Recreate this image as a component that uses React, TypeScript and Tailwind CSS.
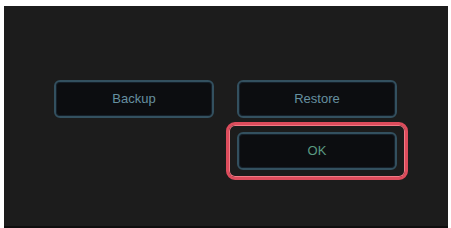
export default function App() {
  const btn =
    "flex h-[38px] w-[160px] items-center justify-center rounded-[6px] border-2 border-[#33505f] bg-[#0c0d10] text-[13px] shadow-[inset_0_0_0_1px_#15202a]";

  return (
    <div className="h-[228px] w-[451px] bg-white pl-[4px] pr-[3px] pt-[6px]" style={{ fontFamily: "'Liberation Sans', Arial, sans-serif" }}>
      <div className="h-[222px] w-full border-b-2 border-[#0e0e0e] bg-[#1c1c1c] pl-[50px] pt-[74px]">
        <div className="grid grid-cols-[160px_160px] gap-x-[23px]">
          <button className={`${btn} text-[#6690a0]`}>Backup</button>
          <button className={`${btn} text-[#6690a0]`}>Restore</button>
          <div />
          <div className="-mx-[11px] mt-[4px] rounded-[9px] border-[3px] border-[#dd4c5c] p-[1px] shadow-[inset_0_0_0_1px_#f27a86]">
            <div className="rounded-[7px] px-[7px] py-[6px]">
              <button className={`${btn} text-[#5a9a82]`}>OK</button>
            </div>
          </div>
        </div>
      </div>
    </div>
  );
}
